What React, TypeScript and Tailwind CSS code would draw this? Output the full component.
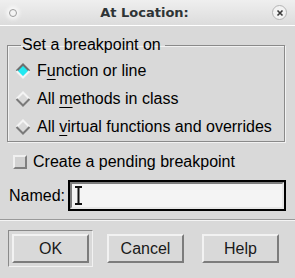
import React from 'react';

const Diamond = ({ on }: { on: boolean }) => (
  <svg width="18" height="18" viewBox="0 0 18 18" className="shrink-0">
    <polygon points="9,2 16,9 9,16 2,9" fill={on ? '#22e8f0' : '#d9d9d9'} />
    {/* upper edges */}
    <polyline points="2.5,9 9,2.5 15.5,9" fill="none" stroke={on ? '#6e6e6e' : '#f4f4f4'} strokeWidth="2" />
    {/* lower edges */}
    <polyline points="2.5,9 9,15.5 15.5,9" fill="none" stroke={on ? '#f4f4f4' : '#7a7a7a'} strokeWidth="2" />
  </svg>
);

const Btn = ({ label }: { label: string }) => (
  <div className="w-[77px] h-[29px] flex items-center justify-center border-2 border-t-[#f2f2f2] border-l-[#f2f2f2] border-b-[#7c7c7c] border-r-[#7c7c7c] text-[16px] text-[#1a1a1a]">
    {label}
  </div>
);

export default function App() {
  const rows = [
    { pre: 'F', u: 'u', post: 'nction or line', on: true },
    { pre: 'All ', u: 'm', post: 'ethods in class', on: false },
    { pre: 'All ', u: 'v', post: 'irtual functions and overrides', on: false },
  ];

  return (
    <div className="w-[295px] h-[278px] bg-[#d9d9d9] flex flex-col overflow-hidden text-black" style={{ fontFamily: '"Liberation Sans", Arial, sans-serif' }}>
      {/* title bar */}
      <div className="h-[26px] shrink-0 bg-gradient-to-b from-[#efefef] to-[#dcdcdc] border-b border-white flex items-center pl-[9px] pr-[8px]">
        <div className="w-[8px] h-[8px] rounded-full bg-[#f4f4f4] border border-[#9a9a9a] shadow-[0_0_4px_2px_rgba(255,255,255,0.9)]" />
        <div className="flex-1 text-center text-[13px] font-bold text-[#2e3436]" style={{ fontFamily: '"DejaVu Sans", sans-serif' }}>
          At Location:
        </div>
        <div className="w-[15px] h-[15px] rounded-full border border-[#b4b4b4] bg-[#f2f2f2] flex items-center justify-center">
          <svg width="8" height="8" viewBox="0 0 8 8">
            <path d="M1.5 1.5 L6.5 6.5 M6.5 1.5 L1.5 6.5" stroke="#3a3a3a" strokeWidth="1.6" />
          </svg>
        </div>
      </div>

      {/* group box */}
      <fieldset className="mt-[10px] ml-[7px] w-[278px] h-[106px] shrink-0 border border-[#8a8a8a] shadow-[inset_1px_1px_0_#f2f2f2,1px_1px_0_#f2f2f2] pt-[3px]">
        <legend className="ml-[13px] pl-[1px] pr-[4px] text-[16px] leading-[18px]">Set a breakpoint on</legend>
        {rows.map((r, i) => (
          <div key={i} className="h-[28px] flex items-center pl-[6px] gap-[5px] text-[16px] whitespace-nowrap">
            <Diamond on={r.on} />
            <span>
              {r.pre}
              <span className="underline underline-offset-[3px]">{r.u}</span>
              {r.post}
            </span>
          </div>
        ))}
      </fieldset>

      {/* checkbox */}
      <div className="mt-[13px] h-[14px] shrink-0 flex items-center pl-[13px] gap-[6px] text-[16px]">
        <div className="w-[14px] h-[14px] border-2 border-t-[#f0f0f0] border-l-[#f0f0f0] border-b-[#808080] border-r-[#808080] bg-[#d2d2d2]" />
        <span className="leading-[18px]">Create a pending breakpoint</span>
      </div>

      {/* named entry */}
      <div className="mt-[11px] h-[31px] shrink-0 flex items-center pl-[9px] gap-[3px] text-[16px]">
        <span className="leading-[18px]">Named:</span>
        <div className="w-[218px] h-[31px] border-2 border-black">
          <div className="w-full h-full border-2 border-t-[#7c7c7c] border-l-[#7c7c7c] border-b-[#e6e6e6] border-r-[#e6e6e6] bg-[#f4f4f4] flex items-center pl-[3px]">
            <svg width="7" height="19" viewBox="0 0 7 19">
              <path d="M0 1 H7 M3.5 1 V18 M0 18 H7" stroke="#111" strokeWidth="2" fill="none" />
            </svg>
          </div>
        </div>
      </div>

      {/* separator */}
      <div className="mt-[8px] h-[2px] shrink-0 border-t border-[#9a9a9a] border-b border-b-[#f4f4f4]" />

      {/* buttons */}
      <div className="mt-[9px] flex items-start pl-[8px] gap-[14px]">
        <div className="p-[3px] border border-t-[#8a8a8a] border-l-[#8a8a8a] border-b-[#f2f2f2] border-r-[#f2f2f2]">
          <Btn label="OK" />
        </div>
        <div className="pt-[4px]">
          <Btn label="Cancel" />
        </div>
        <div className="pt-[4px] ml-[4px]">
          <Btn label="Help" />
        </div>
      </div>
    </div>
  );
}
